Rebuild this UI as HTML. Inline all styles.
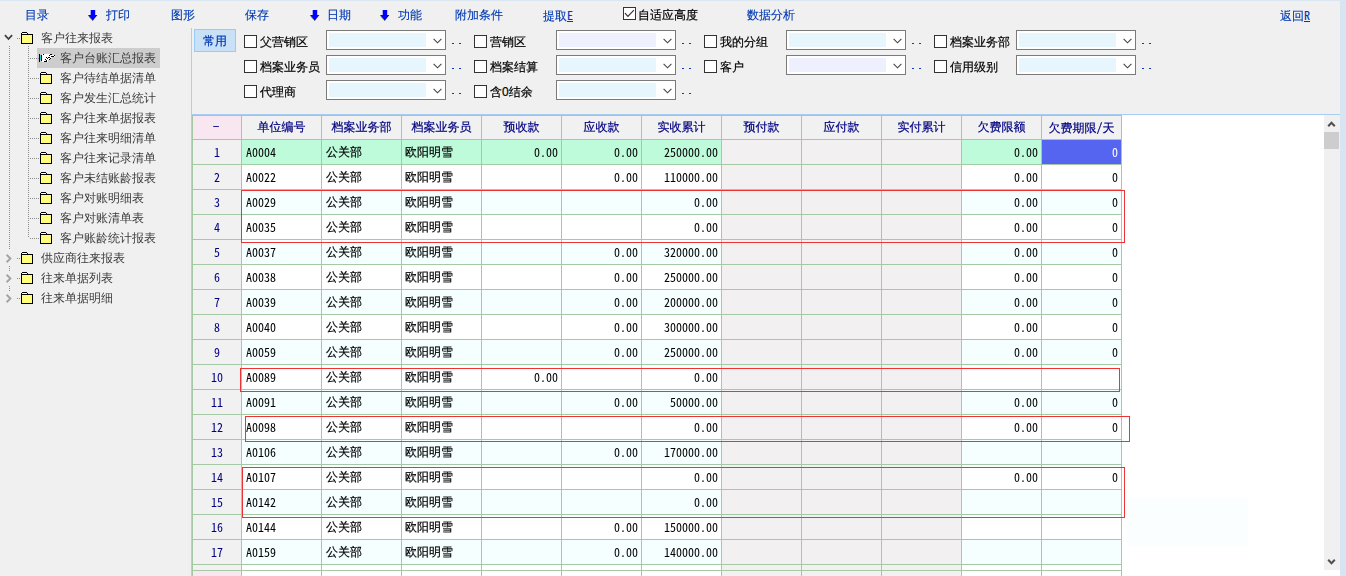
<!DOCTYPE html><html lang="zh-CN"><head><meta charset="utf-8"><title>客户台账汇总报表</title><style>
*{box-sizing:border-box;margin:0;padding:0}
html,body{width:1346px;height:576px;overflow:hidden;background:#f0f0f0}
body{position:relative;font-family:"Liberation Sans","WenQuanYi Zen Hei","Noto Sans CJK SC",sans-serif;font-size:12px;line-height:12px;color:#000}

#topline{position:absolute;left:0;top:0;width:1346px;height:1px;background:#dbe6f3}
.tb{position:absolute;top:9px;height:12px;line-height:12px;color:#0038b4;-webkit-text-stroke-width:.12px;white-space:nowrap}
.arr{position:absolute;top:10px;width:11px;height:11px}
.m{font-family:"Noto Sans Mono CJK SC",IPAGothic,"Liberation Mono",monospace}
/* tree */
.tr{position:absolute;height:12px;line-height:12px;color:#3a3a3a;white-space:nowrap}
.fold{position:absolute;width:13px;height:12px}
.dv{position:absolute;width:1px;background-image:linear-gradient(#8c8c8c 50%,transparent 50%);background-size:1px 2px}
.dh{position:absolute;height:1px;background-image:linear-gradient(90deg,#8c8c8c 50%,transparent 50%);background-size:2px 1px}
/* filters */
.cb{position:absolute;width:13px;height:13px;border:1px solid #333;background:#fff}
.lb{position:absolute;height:12px;line-height:12px;white-space:nowrap;-webkit-text-stroke-width:.2px}
.cmb{position:absolute;width:120px;height:20px;border:1px solid #7a7a7a;background:#fff}
.cmb i{position:absolute;left:2px;top:2px;width:97px;height:14px;background:#e6f6fc}
.cmb.lv i{background:#eef0fe}
.cmb svg{position:absolute;left:105.6px;top:7px;width:9px;height:6px}
.dd{position:absolute;width:10px;height:1px}
.dd:before,.dd:after{content:"";position:absolute;top:0;width:2px;height:1px;background:#0a3cc0}
.dd:before{left:0}.dd:after{left:7px}
/* grid */
#grid{position:absolute;left:192px;top:115px;width:1148px;height:461px;background:#fff;overflow:hidden;will-change:transform}
.c{position:absolute;height:25px;border-right:1px solid #a5c9a5;border-bottom:1px solid #a5c9a5;white-space:nowrap;overflow:hidden}
.h{color:#000080;-webkit-text-stroke-width:.2px;text-align:center;background:#f1f1f1;height:24px;line-height:12px;padding-top:5px}
.n{color:#000080;text-align:center;background:#f2f1f2;padding-top:6px;font-family:"Noto Sans Mono CJK SC",IPAGothic,"Liberation Mono",monospace}
.t{padding:6px 0 0 4px;-webkit-text-stroke-width:.2px}
.a{padding:6px 0 0 4px;font-family:"Noto Sans Mono CJK SC",IPAGothic,"Liberation Mono",monospace}
.r{padding:6px 3px 0 0;text-align:right;font-family:"Noto Sans Mono CJK SC",IPAGothic,"Liberation Mono",monospace}
.g{background:#f2f0f0}
.w{background:#fff}
.z{background:#f5ffff}
.s{background:#bdfbdb}
.red{position:absolute;border:1px solid #ec3434}
</style></head><body>
<div id="topline"></div>
<div class="tb" style="left:25px">目录</div>
<div class="tb" style="left:106px">打印</div>
<div class="tb" style="left:171px">图形</div>
<div class="tb" style="left:245px">保存</div>
<div class="tb" style="left:327px">日期</div>
<div class="tb" style="left:398px">功能</div>
<div class="tb" style="left:455px">附加条件</div>
<div class="tb" style="left:543px">提取<u class=m>E</u></div>
<div class="tb" style="left:747px">数据分析</div>
<div class="tb" style="left:1280px">返回<u class=m>R</u></div>
<svg class="arr" style="left:88px" viewBox="0 0 11 11"><path d="M2.7 0h4.5v5h2.2l-4.6 5.7l-4.8-5.7h2.7z" fill="#0000ff"/><path d="M.3 5.6l4.3 5" stroke="#505028" stroke-width="1" stroke-dasharray="1 .8" fill="none"/></svg>
<svg class="arr" style="left:310px" viewBox="0 0 11 11"><path d="M2.7 0h4.5v5h2.2l-4.6 5.7l-4.8-5.7h2.7z" fill="#0000ff"/><path d="M.3 5.6l4.3 5" stroke="#505028" stroke-width="1" stroke-dasharray="1 .8" fill="none"/></svg>
<svg class="arr" style="left:380px" viewBox="0 0 11 11"><path d="M2.7 0h4.5v5h2.2l-4.6 5.7l-4.8-5.7h2.7z" fill="#0000ff"/><path d="M.3 5.6l4.3 5" stroke="#505028" stroke-width="1" stroke-dasharray="1 .8" fill="none"/></svg>
<div class="cb" style="left:623px;top:7px"><svg viewBox="0 0 11 11" style="position:absolute;left:0;top:0;width:11px;height:11px"><path d="M1 5.2l2.9 3.1l6-6.2" fill="none" stroke="#333" stroke-width="1.2"/></svg></div>
<div class="lb" style="left:638px;top:9px">自适应高度</div>
<svg style="position:absolute;left:4px;top:34px;width:9px;height:7px" viewBox="0 0 9 7"><path d="M.9 1.2l3.6 3.8l3.6-3.8" fill="none" stroke="#404040" stroke-width="1.8"/></svg>
<div class="dh" style="left:17px;top:38px;width:4px"></div>
<svg class="fold" style="left:21px;top:32px" viewBox="0 0 13 12" shape-rendering="crispEdges"><path d="M1 0h5v1h1v1h5v10h-12v-11h1z" fill="#000"/><rect x="1" y="1" width="5" height="1" fill="#fff"/><rect x="1" y="3" width="10" height="8" fill="#ffff7a"/></svg>
<div class="tr" style="left:41px;top:32px">客户往来报表</div>
<div class="dv" style="left:9px;top:46px;height:203px"></div>
<div class="dv" style="left:28px;top:46px;height:192px"></div>
<div style="position:absolute;left:37px;top:48px;width:123px;height:20px;background:#cdcdcd"></div>
<div class="dh" style="left:30px;top:58px;width:9px"></div>
<svg style="position:absolute;left:38px;top:53px;width:18px;height:10px" viewBox="0 0 18 10" shape-rendering="crispEdges"><path d="M4 1h8v1h5v2h-3v1h-2v2h-2v2h-6z" fill="#fff"/><rect x="2" y="2" width="1" height="5" fill="#00e0f0"/><g fill="#000"><rect x="1" y="1" width="1" height="1"/><rect x="1" y="2" width="1" height="1"/><rect x="1" y="3" width="1" height="1"/><rect x="1" y="4" width="1" height="1"/><rect x="1" y="5" width="1" height="1"/><rect x="1" y="6" width="1" height="1"/><rect x="1" y="7" width="1" height="1"/><rect x="1" y="8" width="1" height="1"/><rect x="3" y="2" width="1" height="1"/><rect x="3" y="3" width="1" height="1"/><rect x="3" y="4" width="1" height="1"/><rect x="3" y="5" width="1" height="1"/><rect x="3" y="6" width="1" height="1"/><rect x="3" y="7" width="1" height="1"/><rect x="5" y="1" width="1" height="1"/><rect x="11" y="2" width="1" height="1"/><rect x="12" y="1" width="1" height="1"/><rect x="13" y="1" width="1" height="1"/><rect x="13" y="3" width="1" height="1"/><rect x="14" y="3" width="1" height="1"/><rect x="15" y="3" width="1" height="1"/><rect x="16" y="2" width="1" height="1"/><rect x="8" y="4" width="1" height="1"/><rect x="9" y="5" width="1" height="1"/><rect x="10" y="4" width="1" height="1"/><rect x="11" y="4" width="1" height="1"/><rect x="12" y="5" width="1" height="1"/><rect x="11" y="6" width="1" height="1"/><rect x="7" y="6" width="1" height="1"/><rect x="8" y="7" width="1" height="1"/><rect x="6" y="8" width="1" height="1"/><rect x="7" y="8" width="1" height="1"/><rect x="8" y="8" width="1" height="1"/></g></svg>
<div class="tr" style="left:60px;top:52px">客户台账汇总报表</div>
<div class="dh" style="left:30px;top:78px;width:10px"></div>
<svg class="fold" style="left:40px;top:72px" viewBox="0 0 13 12" shape-rendering="crispEdges"><path d="M1 0h5v1h1v1h5v10h-12v-11h1z" fill="#000"/><rect x="1" y="1" width="5" height="1" fill="#fff"/><rect x="1" y="3" width="10" height="8" fill="#ffff7a"/></svg>
<div class="tr" style="left:60px;top:72px">客户待结单据清单</div>
<div class="dh" style="left:30px;top:98px;width:10px"></div>
<svg class="fold" style="left:40px;top:92px" viewBox="0 0 13 12" shape-rendering="crispEdges"><path d="M1 0h5v1h1v1h5v10h-12v-11h1z" fill="#000"/><rect x="1" y="1" width="5" height="1" fill="#fff"/><rect x="1" y="3" width="10" height="8" fill="#ffff7a"/></svg>
<div class="tr" style="left:60px;top:92px">客户发生汇总统计</div>
<div class="dh" style="left:30px;top:118px;width:10px"></div>
<svg class="fold" style="left:40px;top:112px" viewBox="0 0 13 12" shape-rendering="crispEdges"><path d="M1 0h5v1h1v1h5v10h-12v-11h1z" fill="#000"/><rect x="1" y="1" width="5" height="1" fill="#fff"/><rect x="1" y="3" width="10" height="8" fill="#ffff7a"/></svg>
<div class="tr" style="left:60px;top:112px">客户往来单据报表</div>
<div class="dh" style="left:30px;top:138px;width:10px"></div>
<svg class="fold" style="left:40px;top:132px" viewBox="0 0 13 12" shape-rendering="crispEdges"><path d="M1 0h5v1h1v1h5v10h-12v-11h1z" fill="#000"/><rect x="1" y="1" width="5" height="1" fill="#fff"/><rect x="1" y="3" width="10" height="8" fill="#ffff7a"/></svg>
<div class="tr" style="left:60px;top:132px">客户往来明细清单</div>
<div class="dh" style="left:30px;top:158px;width:10px"></div>
<svg class="fold" style="left:40px;top:152px" viewBox="0 0 13 12" shape-rendering="crispEdges"><path d="M1 0h5v1h1v1h5v10h-12v-11h1z" fill="#000"/><rect x="1" y="1" width="5" height="1" fill="#fff"/><rect x="1" y="3" width="10" height="8" fill="#ffff7a"/></svg>
<div class="tr" style="left:60px;top:152px">客户往来记录清单</div>
<div class="dh" style="left:30px;top:178px;width:10px"></div>
<svg class="fold" style="left:40px;top:172px" viewBox="0 0 13 12" shape-rendering="crispEdges"><path d="M1 0h5v1h1v1h5v10h-12v-11h1z" fill="#000"/><rect x="1" y="1" width="5" height="1" fill="#fff"/><rect x="1" y="3" width="10" height="8" fill="#ffff7a"/></svg>
<div class="tr" style="left:60px;top:172px">客户未结账龄报表</div>
<div class="dh" style="left:30px;top:198px;width:10px"></div>
<svg class="fold" style="left:40px;top:192px" viewBox="0 0 13 12" shape-rendering="crispEdges"><path d="M1 0h5v1h1v1h5v10h-12v-11h1z" fill="#000"/><rect x="1" y="1" width="5" height="1" fill="#fff"/><rect x="1" y="3" width="10" height="8" fill="#ffff7a"/></svg>
<div class="tr" style="left:60px;top:192px">客户对账明细表</div>
<div class="dh" style="left:30px;top:218px;width:10px"></div>
<svg class="fold" style="left:40px;top:212px" viewBox="0 0 13 12" shape-rendering="crispEdges"><path d="M1 0h5v1h1v1h5v10h-12v-11h1z" fill="#000"/><rect x="1" y="1" width="5" height="1" fill="#fff"/><rect x="1" y="3" width="10" height="8" fill="#ffff7a"/></svg>
<div class="tr" style="left:60px;top:212px">客户对账清单表</div>
<div class="dh" style="left:30px;top:238px;width:10px"></div>
<svg class="fold" style="left:40px;top:232px" viewBox="0 0 13 12" shape-rendering="crispEdges"><path d="M1 0h5v1h1v1h5v10h-12v-11h1z" fill="#000"/><rect x="1" y="1" width="5" height="1" fill="#fff"/><rect x="1" y="3" width="10" height="8" fill="#ffff7a"/></svg>
<div class="tr" style="left:60px;top:232px">客户账龄统计报表</div>
<svg style="position:absolute;left:5px;top:254px;width:7px;height:9px" viewBox="0 0 7 9"><path d="M1.6 .8l3.8 3.7l-3.8 3.7" fill="none" stroke="#a3a3a3" stroke-width="1.9"/></svg>
<div class="dh" style="left:17px;top:258px;width:4px"></div>
<svg class="fold" style="left:21px;top:252px" viewBox="0 0 13 12" shape-rendering="crispEdges"><path d="M1 0h5v1h1v1h5v10h-12v-11h1z" fill="#000"/><rect x="1" y="1" width="5" height="1" fill="#fff"/><rect x="1" y="3" width="10" height="8" fill="#ffff7a"/></svg>
<div class="tr" style="left:41px;top:252px">供应商往来报表</div>
<svg style="position:absolute;left:5px;top:274px;width:7px;height:9px" viewBox="0 0 7 9"><path d="M1.6 .8l3.8 3.7l-3.8 3.7" fill="none" stroke="#a3a3a3" stroke-width="1.9"/></svg>
<div class="dh" style="left:17px;top:278px;width:4px"></div>
<svg class="fold" style="left:21px;top:272px" viewBox="0 0 13 12" shape-rendering="crispEdges"><path d="M1 0h5v1h1v1h5v10h-12v-11h1z" fill="#000"/><rect x="1" y="1" width="5" height="1" fill="#fff"/><rect x="1" y="3" width="10" height="8" fill="#ffff7a"/></svg>
<div class="tr" style="left:41px;top:272px">往来单据列表</div>
<div class="dv" style="left:9px;top:266px;height:6px"></div>
<svg style="position:absolute;left:5px;top:294px;width:7px;height:9px" viewBox="0 0 7 9"><path d="M1.6 .8l3.8 3.7l-3.8 3.7" fill="none" stroke="#a3a3a3" stroke-width="1.9"/></svg>
<div class="dh" style="left:17px;top:298px;width:4px"></div>
<svg class="fold" style="left:21px;top:292px" viewBox="0 0 13 12" shape-rendering="crispEdges"><path d="M1 0h5v1h1v1h5v10h-12v-11h1z" fill="#000"/><rect x="1" y="1" width="5" height="1" fill="#fff"/><rect x="1" y="3" width="10" height="8" fill="#ffff7a"/></svg>
<div class="tr" style="left:41px;top:292px">往来单据明细</div>
<div class="dv" style="left:9px;top:286px;height:6px"></div>
<div style="position:absolute;left:191px;top:28px;width:1px;height:548px;background:#aecdf0"></div>
<div style="position:absolute;left:191px;top:114px;width:1149px;height:1px;background:#a9cdf2"></div>
<div style="position:absolute;left:1340px;top:1px;width:6px;height:575px;background:#d7e4f2"></div>
<div style="position:absolute;left:194px;top:29px;width:42px;height:23px;background:#c8e1f6;border:1px solid #96cbf7;color:#0038b4;-webkit-text-stroke-width:.2px;text-align:center;line-height:12px;padding-top:5px">常用</div>
<div class="cb" style="left:244px;top:35px"></div>
<div class="lb" style="left:260px;top:36px">父营销区</div>
<div class="cmb" style="left:326px;top:30px"><i></i><svg viewBox="0 0 9 6"><path d="M.6 .8l3.9 4l3.9-4" fill="none" stroke="#444" stroke-width="1.1"/></svg></div>
<div class="dd" style="left:452px;top:43px"></div>
<div class="cb" style="left:244px;top:60px"></div>
<div class="lb" style="left:260px;top:61px">档案业务员</div>
<div class="cmb" style="left:326px;top:55px"><i></i><svg viewBox="0 0 9 6"><path d="M.6 .8l3.9 4l3.9-4" fill="none" stroke="#444" stroke-width="1.1"/></svg></div>
<div class="dd" style="left:452px;top:68px"></div>
<div class="cb" style="left:244px;top:85px"></div>
<div class="lb" style="left:260px;top:86px">代理商</div>
<div class="cmb" style="left:326px;top:80px"><i></i><svg viewBox="0 0 9 6"><path d="M.6 .8l3.9 4l3.9-4" fill="none" stroke="#444" stroke-width="1.1"/></svg></div>
<div class="dd" style="left:452px;top:93px"></div>
<div class="cb" style="left:474px;top:35px"></div>
<div class="lb" style="left:490px;top:36px">营销区</div>
<div class="cmb lv" style="left:556px;top:30px"><i></i><svg viewBox="0 0 9 6"><path d="M.6 .8l3.9 4l3.9-4" fill="none" stroke="#444" stroke-width="1.1"/></svg></div>
<div class="dd" style="left:682px;top:43px"></div>
<div class="cb" style="left:474px;top:60px"></div>
<div class="lb" style="left:490px;top:61px">档案结算</div>
<div class="cmb" style="left:556px;top:55px"><i></i><svg viewBox="0 0 9 6"><path d="M.6 .8l3.9 4l3.9-4" fill="none" stroke="#444" stroke-width="1.1"/></svg></div>
<div class="dd" style="left:682px;top:68px"></div>
<div class="cb" style="left:474px;top:85px"></div>
<div class="lb" style="left:490px;top:86px">含0结余</div>
<div class="cmb" style="left:556px;top:80px"><i></i><svg viewBox="0 0 9 6"><path d="M.6 .8l3.9 4l3.9-4" fill="none" stroke="#444" stroke-width="1.1"/></svg></div>
<div class="dd" style="left:682px;top:93px"></div>
<div class="cb" style="left:704px;top:35px"></div>
<div class="lb" style="left:720px;top:36px">我的分组</div>
<div class="cmb" style="left:786px;top:30px"><i></i><svg viewBox="0 0 9 6"><path d="M.6 .8l3.9 4l3.9-4" fill="none" stroke="#444" stroke-width="1.1"/></svg></div>
<div class="dd" style="left:912px;top:43px"></div>
<div class="cb" style="left:704px;top:60px"></div>
<div class="lb" style="left:720px;top:61px">客户</div>
<div class="cmb lv" style="left:786px;top:55px"><i></i><svg viewBox="0 0 9 6"><path d="M.6 .8l3.9 4l3.9-4" fill="none" stroke="#444" stroke-width="1.1"/></svg></div>
<div class="dd" style="left:912px;top:68px"></div>
<div class="cb" style="left:934px;top:35px"></div>
<div class="lb" style="left:950px;top:36px">档案业务部</div>
<div class="cmb" style="left:1016px;top:30px"><i></i><svg viewBox="0 0 9 6"><path d="M.6 .8l3.9 4l3.9-4" fill="none" stroke="#444" stroke-width="1.1"/></svg></div>
<div class="dd" style="left:1142px;top:43px"></div>
<div class="cb" style="left:934px;top:60px"></div>
<div class="lb" style="left:950px;top:61px">信用级别</div>
<div class="cmb" style="left:1016px;top:55px"><i></i><svg viewBox="0 0 9 6"><path d="M.6 .8l3.9 4l3.9-4" fill="none" stroke="#444" stroke-width="1.1"/></svg></div>
<div class="dd" style="left:1142px;top:68px"></div>
<div id="grid">
<div style="position:absolute;left:0;top:0;width:930px;height:1px;background:#a5c9a5"></div>
<div style="position:absolute;left:0;top:0;width:1px;height:461px;background:#a5c9a5"></div>
<div class="c h" style="left:1px;top:1px;width:49px;background:#f8e6f0;padding:4px 2px 0 0;">－</div>
<div class="c h" style="left:50px;top:1px;width:80px;">单位编号</div>
<div class="c h" style="left:130px;top:1px;width:80px;">档案业务部</div>
<div class="c h" style="left:210px;top:1px;width:80px;">档案业务员</div>
<div class="c h" style="left:290px;top:1px;width:80px;">预收款</div>
<div class="c h" style="left:370px;top:1px;width:80px;">应收款</div>
<div class="c h" style="left:450px;top:1px;width:80px;">实收累计</div>
<div class="c h" style="left:530px;top:1px;width:80px;">预付款</div>
<div class="c h" style="left:610px;top:1px;width:80px;">应付款</div>
<div class="c h" style="left:690px;top:1px;width:80px;">实付累计</div>
<div class="c h" style="left:770px;top:1px;width:80px;">欠费限额</div>
<div class="c h" style="left:850px;top:1px;width:80px;">欠费期限<span class=m>/</span>天</div>
<div class="c n" style="left:1px;top:25px;width:49px;">1</div>
<div class="c a s" style="left:50px;top:25px;width:80px;">A0004</div>
<div class="c t s" style="left:130px;top:25px;width:80px;">公关部</div>
<div class="c t s" style="left:210px;top:25px;width:80px;padding-left:3px;">欧阳明雪</div>
<div class="c r s" style="left:290px;top:25px;width:80px;">0.00</div>
<div class="c r s" style="left:370px;top:25px;width:80px;">0.00</div>
<div class="c r s" style="left:450px;top:25px;width:80px;">250000.00</div>
<div class="c g" style="left:530px;top:25px;width:80px;"></div>
<div class="c g" style="left:610px;top:25px;width:80px;"></div>
<div class="c g" style="left:690px;top:25px;width:80px;"></div>
<div class="c r s" style="left:770px;top:25px;width:80px;">0.00</div>
<div class="c r" style="left:850px;top:25px;width:80px;background:#5565ef;color:#fff;">0</div>
<div class="c n" style="left:1px;top:50px;width:49px;">2</div>
<div class="c a w" style="left:50px;top:50px;width:80px;">A0022</div>
<div class="c t w" style="left:130px;top:50px;width:80px;">公关部</div>
<div class="c t w" style="left:210px;top:50px;width:80px;padding-left:3px;">欧阳明雪</div>
<div class="c r w" style="left:290px;top:50px;width:80px;"></div>
<div class="c r w" style="left:370px;top:50px;width:80px;">0.00</div>
<div class="c r w" style="left:450px;top:50px;width:80px;">110000.00</div>
<div class="c g" style="left:530px;top:50px;width:80px;"></div>
<div class="c g" style="left:610px;top:50px;width:80px;"></div>
<div class="c g" style="left:690px;top:50px;width:80px;"></div>
<div class="c r w" style="left:770px;top:50px;width:80px;">0.00</div>
<div class="c r w" style="left:850px;top:50px;width:80px;">0</div>
<div class="c n" style="left:1px;top:75px;width:49px;">3</div>
<div class="c a z" style="left:50px;top:75px;width:80px;">A0029</div>
<div class="c t z" style="left:130px;top:75px;width:80px;">公关部</div>
<div class="c t z" style="left:210px;top:75px;width:80px;padding-left:3px;">欧阳明雪</div>
<div class="c r z" style="left:290px;top:75px;width:80px;"></div>
<div class="c r z" style="left:370px;top:75px;width:80px;"></div>
<div class="c r z" style="left:450px;top:75px;width:80px;">0.00</div>
<div class="c g" style="left:530px;top:75px;width:80px;"></div>
<div class="c g" style="left:610px;top:75px;width:80px;"></div>
<div class="c g" style="left:690px;top:75px;width:80px;"></div>
<div class="c r z" style="left:770px;top:75px;width:80px;">0.00</div>
<div class="c r z" style="left:850px;top:75px;width:80px;">0</div>
<div class="c n" style="left:1px;top:100px;width:49px;">4</div>
<div class="c a w" style="left:50px;top:100px;width:80px;">A0035</div>
<div class="c t w" style="left:130px;top:100px;width:80px;">公关部</div>
<div class="c t w" style="left:210px;top:100px;width:80px;padding-left:3px;">欧阳明雪</div>
<div class="c r w" style="left:290px;top:100px;width:80px;"></div>
<div class="c r w" style="left:370px;top:100px;width:80px;"></div>
<div class="c r w" style="left:450px;top:100px;width:80px;">0.00</div>
<div class="c g" style="left:530px;top:100px;width:80px;"></div>
<div class="c g" style="left:610px;top:100px;width:80px;"></div>
<div class="c g" style="left:690px;top:100px;width:80px;"></div>
<div class="c r w" style="left:770px;top:100px;width:80px;">0.00</div>
<div class="c r w" style="left:850px;top:100px;width:80px;">0</div>
<div class="c n" style="left:1px;top:125px;width:49px;">5</div>
<div class="c a z" style="left:50px;top:125px;width:80px;">A0037</div>
<div class="c t z" style="left:130px;top:125px;width:80px;">公关部</div>
<div class="c t z" style="left:210px;top:125px;width:80px;padding-left:3px;">欧阳明雪</div>
<div class="c r z" style="left:290px;top:125px;width:80px;"></div>
<div class="c r z" style="left:370px;top:125px;width:80px;">0.00</div>
<div class="c r z" style="left:450px;top:125px;width:80px;">320000.00</div>
<div class="c g" style="left:530px;top:125px;width:80px;"></div>
<div class="c g" style="left:610px;top:125px;width:80px;"></div>
<div class="c g" style="left:690px;top:125px;width:80px;"></div>
<div class="c r z" style="left:770px;top:125px;width:80px;">0.00</div>
<div class="c r z" style="left:850px;top:125px;width:80px;">0</div>
<div class="c n" style="left:1px;top:150px;width:49px;">6</div>
<div class="c a w" style="left:50px;top:150px;width:80px;">A0038</div>
<div class="c t w" style="left:130px;top:150px;width:80px;">公关部</div>
<div class="c t w" style="left:210px;top:150px;width:80px;padding-left:3px;">欧阳明雪</div>
<div class="c r w" style="left:290px;top:150px;width:80px;"></div>
<div class="c r w" style="left:370px;top:150px;width:80px;">0.00</div>
<div class="c r w" style="left:450px;top:150px;width:80px;">250000.00</div>
<div class="c g" style="left:530px;top:150px;width:80px;"></div>
<div class="c g" style="left:610px;top:150px;width:80px;"></div>
<div class="c g" style="left:690px;top:150px;width:80px;"></div>
<div class="c r w" style="left:770px;top:150px;width:80px;">0.00</div>
<div class="c r w" style="left:850px;top:150px;width:80px;">0</div>
<div class="c n" style="left:1px;top:175px;width:49px;">7</div>
<div class="c a z" style="left:50px;top:175px;width:80px;">A0039</div>
<div class="c t z" style="left:130px;top:175px;width:80px;">公关部</div>
<div class="c t z" style="left:210px;top:175px;width:80px;padding-left:3px;">欧阳明雪</div>
<div class="c r z" style="left:290px;top:175px;width:80px;"></div>
<div class="c r z" style="left:370px;top:175px;width:80px;">0.00</div>
<div class="c r z" style="left:450px;top:175px;width:80px;">200000.00</div>
<div class="c g" style="left:530px;top:175px;width:80px;"></div>
<div class="c g" style="left:610px;top:175px;width:80px;"></div>
<div class="c g" style="left:690px;top:175px;width:80px;"></div>
<div class="c r z" style="left:770px;top:175px;width:80px;">0.00</div>
<div class="c r z" style="left:850px;top:175px;width:80px;">0</div>
<div class="c n" style="left:1px;top:200px;width:49px;">8</div>
<div class="c a w" style="left:50px;top:200px;width:80px;">A0040</div>
<div class="c t w" style="left:130px;top:200px;width:80px;">公关部</div>
<div class="c t w" style="left:210px;top:200px;width:80px;padding-left:3px;">欧阳明雪</div>
<div class="c r w" style="left:290px;top:200px;width:80px;"></div>
<div class="c r w" style="left:370px;top:200px;width:80px;">0.00</div>
<div class="c r w" style="left:450px;top:200px;width:80px;">300000.00</div>
<div class="c g" style="left:530px;top:200px;width:80px;"></div>
<div class="c g" style="left:610px;top:200px;width:80px;"></div>
<div class="c g" style="left:690px;top:200px;width:80px;"></div>
<div class="c r w" style="left:770px;top:200px;width:80px;">0.00</div>
<div class="c r w" style="left:850px;top:200px;width:80px;">0</div>
<div class="c n" style="left:1px;top:225px;width:49px;">9</div>
<div class="c a z" style="left:50px;top:225px;width:80px;">A0059</div>
<div class="c t z" style="left:130px;top:225px;width:80px;">公关部</div>
<div class="c t z" style="left:210px;top:225px;width:80px;padding-left:3px;">欧阳明雪</div>
<div class="c r z" style="left:290px;top:225px;width:80px;"></div>
<div class="c r z" style="left:370px;top:225px;width:80px;">0.00</div>
<div class="c r z" style="left:450px;top:225px;width:80px;">250000.00</div>
<div class="c g" style="left:530px;top:225px;width:80px;"></div>
<div class="c g" style="left:610px;top:225px;width:80px;"></div>
<div class="c g" style="left:690px;top:225px;width:80px;"></div>
<div class="c r z" style="left:770px;top:225px;width:80px;">0.00</div>
<div class="c r z" style="left:850px;top:225px;width:80px;">0</div>
<div class="c n" style="left:1px;top:250px;width:49px;">10</div>
<div class="c a w" style="left:50px;top:250px;width:80px;">A0089</div>
<div class="c t w" style="left:130px;top:250px;width:80px;">公关部</div>
<div class="c t w" style="left:210px;top:250px;width:80px;padding-left:3px;">欧阳明雪</div>
<div class="c r w" style="left:290px;top:250px;width:80px;">0.00</div>
<div class="c r w" style="left:370px;top:250px;width:80px;"></div>
<div class="c r w" style="left:450px;top:250px;width:80px;">0.00</div>
<div class="c g" style="left:530px;top:250px;width:80px;"></div>
<div class="c g" style="left:610px;top:250px;width:80px;"></div>
<div class="c g" style="left:690px;top:250px;width:80px;"></div>
<div class="c r w" style="left:770px;top:250px;width:80px;"></div>
<div class="c r w" style="left:850px;top:250px;width:80px;"></div>
<div class="c n" style="left:1px;top:275px;width:49px;">11</div>
<div class="c a z" style="left:50px;top:275px;width:80px;">A0091</div>
<div class="c t z" style="left:130px;top:275px;width:80px;">公关部</div>
<div class="c t z" style="left:210px;top:275px;width:80px;padding-left:3px;">欧阳明雪</div>
<div class="c r z" style="left:290px;top:275px;width:80px;"></div>
<div class="c r z" style="left:370px;top:275px;width:80px;">0.00</div>
<div class="c r z" style="left:450px;top:275px;width:80px;">50000.00</div>
<div class="c g" style="left:530px;top:275px;width:80px;"></div>
<div class="c g" style="left:610px;top:275px;width:80px;"></div>
<div class="c g" style="left:690px;top:275px;width:80px;"></div>
<div class="c r z" style="left:770px;top:275px;width:80px;">0.00</div>
<div class="c r z" style="left:850px;top:275px;width:80px;">0</div>
<div class="c n" style="left:1px;top:300px;width:49px;">12</div>
<div class="c a w" style="left:50px;top:300px;width:80px;">A0098</div>
<div class="c t w" style="left:130px;top:300px;width:80px;">公关部</div>
<div class="c t w" style="left:210px;top:300px;width:80px;padding-left:3px;">欧阳明雪</div>
<div class="c r w" style="left:290px;top:300px;width:80px;"></div>
<div class="c r w" style="left:370px;top:300px;width:80px;"></div>
<div class="c r w" style="left:450px;top:300px;width:80px;">0.00</div>
<div class="c g" style="left:530px;top:300px;width:80px;"></div>
<div class="c g" style="left:610px;top:300px;width:80px;"></div>
<div class="c g" style="left:690px;top:300px;width:80px;"></div>
<div class="c r w" style="left:770px;top:300px;width:80px;">0.00</div>
<div class="c r w" style="left:850px;top:300px;width:80px;">0</div>
<div class="c n" style="left:1px;top:325px;width:49px;">13</div>
<div class="c a z" style="left:50px;top:325px;width:80px;">A0106</div>
<div class="c t z" style="left:130px;top:325px;width:80px;">公关部</div>
<div class="c t z" style="left:210px;top:325px;width:80px;padding-left:3px;">欧阳明雪</div>
<div class="c r z" style="left:290px;top:325px;width:80px;"></div>
<div class="c r z" style="left:370px;top:325px;width:80px;">0.00</div>
<div class="c r z" style="left:450px;top:325px;width:80px;">170000.00</div>
<div class="c g" style="left:530px;top:325px;width:80px;"></div>
<div class="c g" style="left:610px;top:325px;width:80px;"></div>
<div class="c g" style="left:690px;top:325px;width:80px;"></div>
<div class="c r z" style="left:770px;top:325px;width:80px;"></div>
<div class="c r z" style="left:850px;top:325px;width:80px;"></div>
<div class="c n" style="left:1px;top:350px;width:49px;">14</div>
<div class="c a w" style="left:50px;top:350px;width:80px;">A0107</div>
<div class="c t w" style="left:130px;top:350px;width:80px;">公关部</div>
<div class="c t w" style="left:210px;top:350px;width:80px;padding-left:3px;">欧阳明雪</div>
<div class="c r w" style="left:290px;top:350px;width:80px;"></div>
<div class="c r w" style="left:370px;top:350px;width:80px;"></div>
<div class="c r w" style="left:450px;top:350px;width:80px;">0.00</div>
<div class="c g" style="left:530px;top:350px;width:80px;"></div>
<div class="c g" style="left:610px;top:350px;width:80px;"></div>
<div class="c g" style="left:690px;top:350px;width:80px;"></div>
<div class="c r w" style="left:770px;top:350px;width:80px;">0.00</div>
<div class="c r w" style="left:850px;top:350px;width:80px;">0</div>
<div class="c n" style="left:1px;top:375px;width:49px;">15</div>
<div class="c a z" style="left:50px;top:375px;width:80px;">A0142</div>
<div class="c t z" style="left:130px;top:375px;width:80px;">公关部</div>
<div class="c t z" style="left:210px;top:375px;width:80px;padding-left:3px;">欧阳明雪</div>
<div class="c r z" style="left:290px;top:375px;width:80px;"></div>
<div class="c r z" style="left:370px;top:375px;width:80px;"></div>
<div class="c r z" style="left:450px;top:375px;width:80px;">0.00</div>
<div class="c g" style="left:530px;top:375px;width:80px;"></div>
<div class="c g" style="left:610px;top:375px;width:80px;"></div>
<div class="c g" style="left:690px;top:375px;width:80px;"></div>
<div class="c r z" style="left:770px;top:375px;width:80px;"></div>
<div class="c r z" style="left:850px;top:375px;width:80px;"></div>
<div class="c n" style="left:1px;top:400px;width:49px;">16</div>
<div class="c a w" style="left:50px;top:400px;width:80px;">A0144</div>
<div class="c t w" style="left:130px;top:400px;width:80px;">公关部</div>
<div class="c t w" style="left:210px;top:400px;width:80px;padding-left:3px;">欧阳明雪</div>
<div class="c r w" style="left:290px;top:400px;width:80px;"></div>
<div class="c r w" style="left:370px;top:400px;width:80px;">0.00</div>
<div class="c r w" style="left:450px;top:400px;width:80px;">150000.00</div>
<div class="c g" style="left:530px;top:400px;width:80px;"></div>
<div class="c g" style="left:610px;top:400px;width:80px;"></div>
<div class="c g" style="left:690px;top:400px;width:80px;"></div>
<div class="c r w" style="left:770px;top:400px;width:80px;"></div>
<div class="c r w" style="left:850px;top:400px;width:80px;"></div>
<div class="c n" style="left:1px;top:425px;width:49px;">17</div>
<div class="c a z" style="left:50px;top:425px;width:80px;">A0159</div>
<div class="c t z" style="left:130px;top:425px;width:80px;">公关部</div>
<div class="c t z" style="left:210px;top:425px;width:80px;padding-left:3px;">欧阳明雪</div>
<div class="c r z" style="left:290px;top:425px;width:80px;"></div>
<div class="c r z" style="left:370px;top:425px;width:80px;">0.00</div>
<div class="c r z" style="left:450px;top:425px;width:80px;">140000.00</div>
<div class="c g" style="left:530px;top:425px;width:80px;"></div>
<div class="c g" style="left:610px;top:425px;width:80px;"></div>
<div class="c g" style="left:690px;top:425px;width:80px;"></div>
<div class="c r z" style="left:770px;top:425px;width:80px;"></div>
<div class="c r z" style="left:850px;top:425px;width:80px;"></div>
<div class="c g" style="left:1px;top:450px;width:49px;height:6px;"></div>
<div class="c w" style="left:50px;top:450px;width:80px;height:6px;"></div>
<div class="c w" style="left:130px;top:450px;width:80px;height:6px;"></div>
<div class="c w" style="left:210px;top:450px;width:80px;height:6px;"></div>
<div class="c w" style="left:290px;top:450px;width:80px;height:6px;"></div>
<div class="c w" style="left:370px;top:450px;width:80px;height:6px;"></div>
<div class="c w" style="left:450px;top:450px;width:80px;height:6px;"></div>
<div class="c g" style="left:530px;top:450px;width:80px;height:6px;"></div>
<div class="c g" style="left:610px;top:450px;width:80px;height:6px;"></div>
<div class="c g" style="left:690px;top:450px;width:80px;height:6px;"></div>
<div class="c w" style="left:770px;top:450px;width:80px;height:6px;"></div>
<div class="c w" style="left:850px;top:450px;width:80px;height:6px;"></div>
<div class="c w" style="left:1px;top:456px;width:49px;background:#f8e6f0;"></div>
<div class="c w" style="left:50px;top:456px;width:80px;"></div>
<div class="c w" style="left:130px;top:456px;width:80px;"></div>
<div class="c w" style="left:210px;top:456px;width:80px;"></div>
<div class="c w" style="left:290px;top:456px;width:80px;"></div>
<div class="c w" style="left:370px;top:456px;width:80px;"></div>
<div class="c w" style="left:450px;top:456px;width:80px;"></div>
<div class="c g" style="left:530px;top:456px;width:80px;"></div>
<div class="c g" style="left:610px;top:456px;width:80px;"></div>
<div class="c g" style="left:690px;top:456px;width:80px;"></div>
<div class="c w" style="left:770px;top:456px;width:80px;"></div>
<div class="c w" style="left:850px;top:456px;width:80px;"></div>
</div>
<div class="red" style="left:241px;top:190px;width:884px;height:53px"></div>
<div class="red" style="left:240px;top:368px;width:880px;height:24px"></div>
<div class="red" style="left:245px;top:416px;width:885px;height:26px"></div>
<div class="red" style="left:242px;top:467px;width:883px;height:51px"></div>
<div style="position:absolute;left:1126px;top:498px;width:122px;height:48px;background:#fafefe;border-radius:3px"></div>
<div style="position:absolute;left:1324px;top:115px;width:16px;height:455px;background:#f0f0f0"></div>
<div style="position:absolute;left:1324px;top:132px;width:15px;height:17px;background:#cdcdcd"></div>
<svg style="position:absolute;left:1327px;top:120px;width:9px;height:8px" viewBox="0 0 9 8"><path d="M1.2 6.3l3.3-3.6l3.3 3.6" fill="none" stroke="#505050" stroke-width="2"/></svg>
<svg style="position:absolute;left:1327px;top:558px;width:9px;height:8px" viewBox="0 0 9 8"><path d="M1.2 1.7l3.3 3.6l3.3-3.6" fill="none" stroke="#505050" stroke-width="2"/></svg>
</body></html>
